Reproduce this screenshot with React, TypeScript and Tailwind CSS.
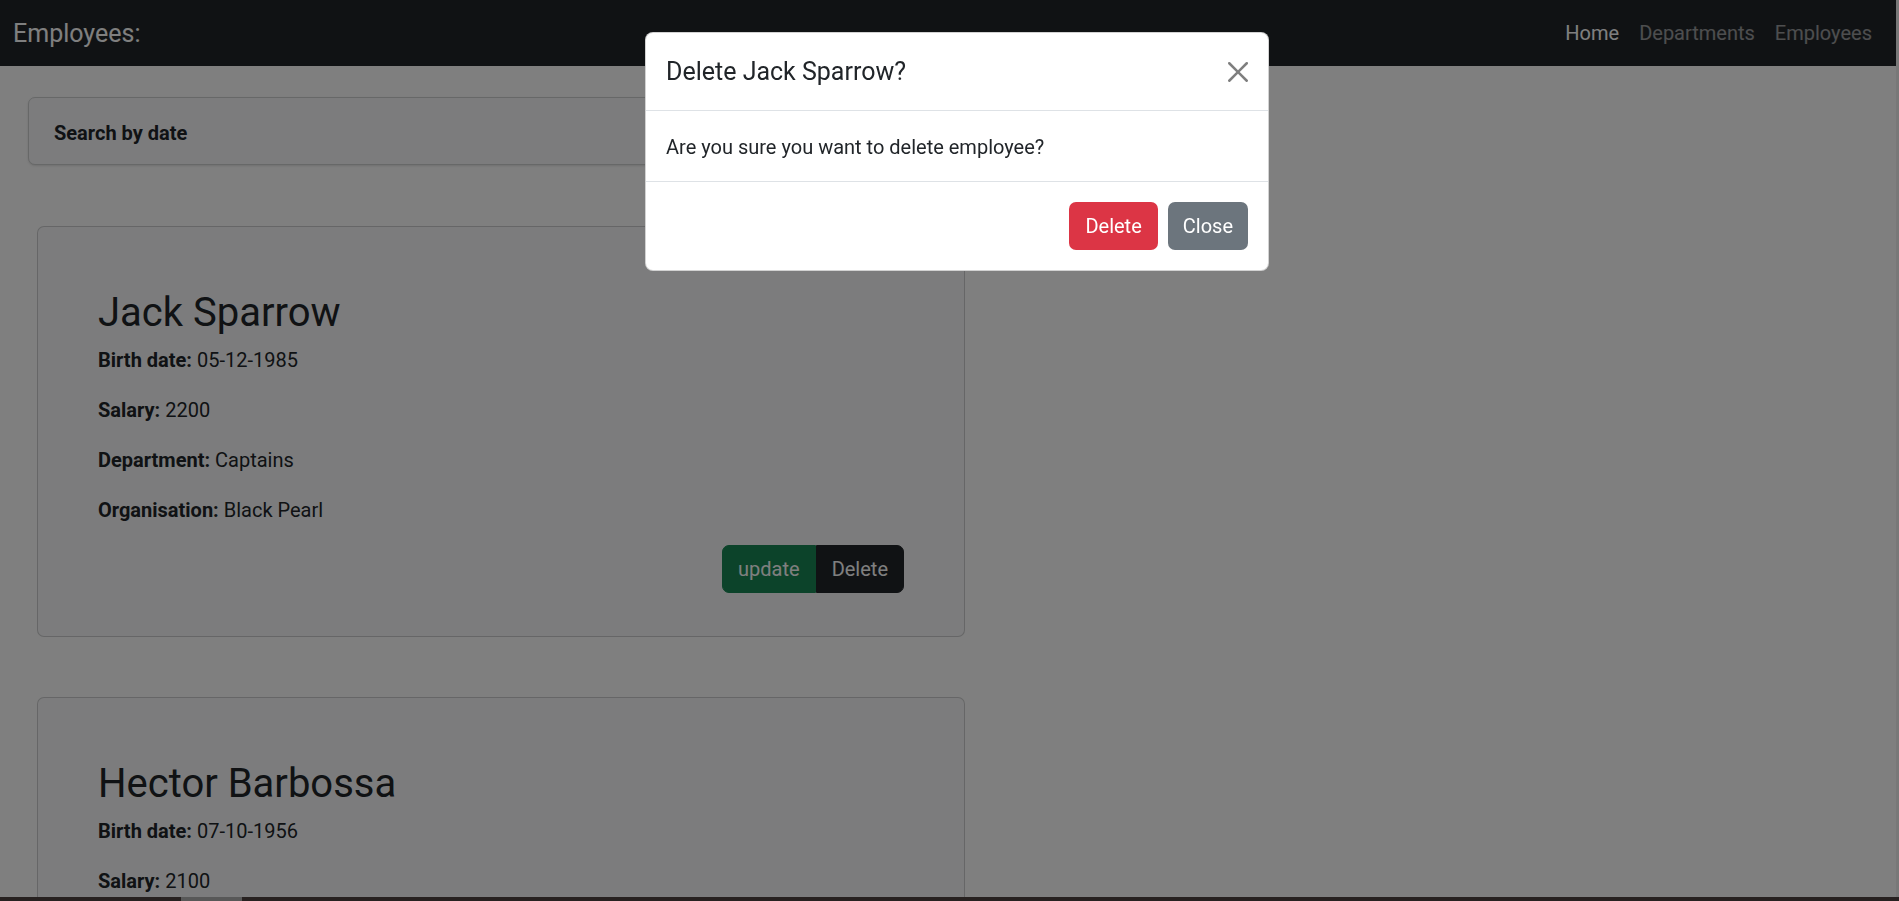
import React from "react";

const employees = [
  {
    name: "Jack Sparrow",
    birthDate: "05-12-1985",
    salary: "2200",
    department: "Captains",
    organisation: "Black Pearl",
  },
  {
    name: "Hector Barbossa",
    birthDate: "07-10-1956",
    salary: "2100",
    department: "Captains",
    organisation: "Queen Anne's Revenge",
  },
];

const Field = ({ label, value }: { label: string; value: string }) => (
  <p className="text-[20px] leading-[30px] mb-[20px] text-[#212529]">
    <span className="font-bold">{label}:</span> {value}
  </p>
);

const EmployeeCard = ({ emp }: { emp: (typeof employees)[number] }) => (
  <div className="w-[928px] ml-[9px] mb-[60px] bg-[#f8f9fa] border border-black/[0.175] rounded-[7px] pt-[62px] pb-[43px] px-[60px]">
    <h2 className="text-[40px] leading-[48px] font-normal mb-[8px] text-[#212529]">{emp.name}</h2>
    <Field label="Birth date" value={emp.birthDate} />
    <Field label="Salary" value={emp.salary} />
    <Field label="Department" value={emp.department} />
    <Field label="Organisation" value={emp.organisation} />
    <div className="flex justify-end">
      <button className="h-[48px] px-[15px] text-[20px] leading-[30px] text-white bg-[#198754] border border-[#198754] rounded-l-[7px]">
        update
      </button>
      <button className="h-[48px] px-[15px] text-[20px] leading-[30px] text-white bg-[#212529] border border-[#212529] rounded-r-[7px]">
        Delete
      </button>
    </div>
  </div>
);

export default function App() {
  return (
    <div className="relative h-screen overflow-hidden flex flex-col bg-white font-['Roboto',sans-serif]">
      <div className="flex flex-1 min-h-0">
        <div className="flex-1 min-w-0 overflow-hidden">
          <nav className="h-[66px] bg-[#212529] flex items-center justify-between pl-[13px] pr-[14px]">
            <span className="text-[25px] leading-[37px] text-white">Employees:</span>
            <ul className="flex items-center text-[20px] leading-[30px]">
              <li className="px-[10px] text-white">Home</li>
              <li className="px-[10px] text-white/55">Departments</li>
              <li className="px-[10px] text-white/55">Employees</li>
            </ul>
          </nav>

          <main className="pl-[28px] pt-[31px]">
            <div className="w-[940px] h-[68px] mb-[61px] flex items-center pl-[25px] pt-[3px] bg-[#f8f9fa] border border-[#cfd1d1] rounded-[7px] shadow-sm">
              <span className="text-[20px] leading-[30px] font-bold text-[#212529]">Search by date</span>
            </div>

            {employees.map((emp, index) => (
              <EmployeeCard key={index} emp={emp} />
            ))}
          </main>
        </div>
        <div className="w-[3px] bg-[#f0f0f0]" />
      </div>

      <div className="h-[4px] flex bg-[#4f4340]">
        <div className="w-[181px]" />
        <div className="w-[61px] bg-[#b0b0b0]" />
      </div>

      {/* modal backdrop */}
      <div className="fixed inset-0 bg-black/50" />

      <div className="fixed inset-0 flex items-start pt-[32px] pl-[645px]">
        <div className="w-[624px] bg-white border border-black/[0.175] rounded-[8px] text-[#212529]">
          <div className="flex items-center justify-between px-[20px] py-[20px] border-b border-[#dee2e6]">
            <h5 className="text-[25px] leading-[37px] font-normal">Delete Jack Sparrow?</h5>
            <button className="w-[20px] h-[20px] opacity-50" aria-label="Close">
              <svg viewBox="0 0 16 16" width="20" height="20" fill="#000">
                <path d="M.293.293a1 1 0 0 1 1.414 0L8 6.586 14.293.293a1 1 0 1 1 1.414 1.414L9.414 8l6.293 6.293a1 1 0 0 1-1.414 1.414L8 9.414l-6.293 6.293a1 1 0 0 1-1.414-1.414L6.586 8 .293 1.707a1 1 0 0 1 0-1.414z" />
              </svg>
            </button>
          </div>
          <div className="px-[20px] pt-[21px] pb-[19px] border-b border-[#dee2e6]">
            <p className="text-[20px] leading-[30px]">Are you sure you want to delete employee?</p>
          </div>
          <div className="flex justify-end items-center p-[15px]">
            <button className="m-[5px] h-[48px] px-[16px] text-[20px] leading-[30px] text-white bg-[#dc3545] rounded-[7px]">
              Delete
            </button>
            <button className="m-[5px] h-[48px] px-[15px] text-[20px] leading-[30px] text-white bg-[#6c757d] rounded-[7px]">
              Close
            </button>
          </div>
        </div>
      </div>
    </div>
  );
}
